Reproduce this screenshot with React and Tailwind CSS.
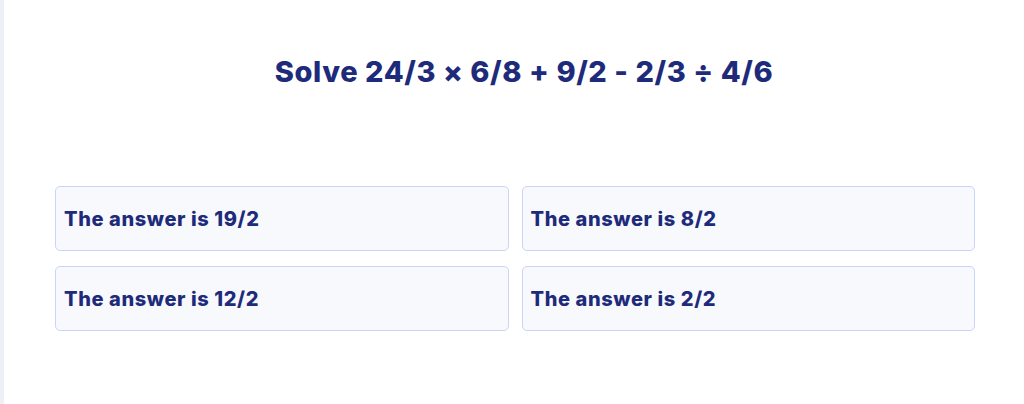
const answers = ["19/2", "8/2", "12/2", "2/2"];

export default function App() {
  return (
    <div className="flex h-[404px] w-full bg-white [font-family:Inter,'Noto_Sans',sans-serif]">
      <div className="w-[4px] shrink-0 bg-[#eef0f8]" />
      <main className="flex flex-1 flex-col pl-[51px] pr-[49px] pt-[52px]">
        <h1 className="pl-[18px] text-center text-[29px] font-extrabold leading-[40px] tracking-[0.02em] text-[#1e2b7b]">
          Solve 24/3 × 6/8 + 9/2 - 2/3 ÷ 4/6
        </h1>
        <div className="mt-[94px] grid grid-cols-2 gap-x-[13px] gap-y-[15px]">
          {answers.map((a) => (
            <button
              key={a}
              type="button"
              className="flex h-[65px] items-center rounded-[5px] border border-[#c9d3fb] bg-[#f8f9fc] px-[8px] text-left text-[20px] font-extrabold tracking-[0.03em] text-[#1e2b7b]"
            >
              The answer is {a}
            </button>
          ))}
        </div>
      </main>
    </div>
  );
}
